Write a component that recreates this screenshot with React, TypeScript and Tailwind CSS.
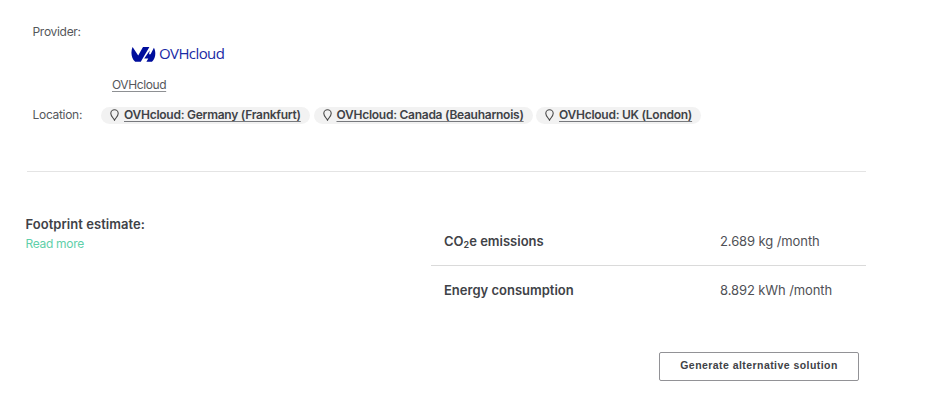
import React from 'react';

const LOCATIONS = [
  { name: 'OVHcloud: Germany (Frankfurt)', width: 'w-[209px]', textWidth: 'w-[177px]' },
  { name: 'OVHcloud: Canada (Beauharnois)', width: 'w-[219px]', textWidth: 'w-[187px]' },
  { name: 'OVHcloud: UK (London)', width: 'w-[165px]', textWidth: 'w-[132px]' },
];

const ESTIMATES = [
  { label: <>CO<sub className="text-[9px] bottom-[-2px]">2</sub>e emissions</>, value: '2.689 kg /month' },
  { label: <>Energy consumption</>, value: '8.892 kWh /month' },
];

const PinIcon: React.FC = () => (
  <svg width="9" height="12" viewBox="0 0 9 12" fill="none" stroke="#4a4a4a" strokeWidth="1.1" className="shrink-0">
    <path d="M4.5 11.2C3.6 9.2 0.8 7.1 0.8 4.4a3.7 3.7 0 0 1 7.4 0C8.2 7.1 5.4 9.2 4.5 11.2Z" />
  </svg>
);

const OvhLogo: React.FC = () => (
  <div className="flex h-5 items-center gap-[3px] text-[#1a2ba5]">
    <svg width="25" height="15" viewBox="0 0 25 15" fill="#000e9c">
      <path d="M1.6 0L7.2 8.6L12 0H18.4L9.8 14.8H4.2C0.2 11 -0.5 5 1.6 0Z" />
      <path d="M22.9 0.8C25.2 5 24.8 11 21 14.8H15.4L17.3 11.4H13.2L18.8 3.6L18 7.2H19.6Z" />
    </svg>
    <span className="pb-0.5 font-['Open_Sans',sans-serif] text-[15px] leading-[18px] tracking-[-0.6px]">OVHcloud</span>
  </div>
);

const App: React.FC = () => {
  return (
    <div className="h-[410px] w-[936px] overflow-hidden bg-white font-['Inter',sans-serif] text-[#404247]">
      <div className="pt-6 pl-[32.5px] text-xs leading-4 tracking-[-0.3px]">
        <div className="flex text-[#55575b]">
          <span className="w-[79.5px]">Provider:</span>
          <div className="pt-5">
            <div className="pl-[19px]">
              <OvhLogo />
            </div>
            <a className="mt-[13px] block tracking-[-0.4px] underline decoration-[#8e9093] decoration-1 underline-offset-2">OVHcloud</a>
          </div>
        </div>

        <div className="mt-[14px] flex items-center">
          <span className="w-[68.5px] pb-px text-[#55575b]">Location:</span>
          <div className="flex gap-[3.5px]">
            {LOCATIONS.map((item) => (
              <div key={item.name} className={`flex h-[17px] items-center gap-[5px] rounded-full bg-[#f2f2f2] pb-px pl-[9px] ${item.width}`}>
                <PinIcon />
                <a className={`font-semibold tracking-[-0.26px] whitespace-nowrap underline decoration-[#77797d] decoration-1 underline-offset-2 ${item.textWidth}`}>{item.name}</a>
              </div>
            ))}
          </div>
        </div>
      </div>

      <hr className="mt-[46.5px] ml-[27px] w-[839px] border-[#e4e4e4]" />

      <div className="flex pt-[43px] pl-[25.5px]">
        <div className="w-[405.5px]">
          <h2 className="text-[13px] leading-[18px] font-semibold tracking-[0.05px]">Footprint estimate:</h2>
          <a className="mt-0.5 block text-xs leading-[18px] tracking-[-0.3px] text-[#5fcfa9]">Read more</a>
        </div>
        <div className="w-[435px] divide-y divide-[#dadada] pt-0.5 text-[13px]">
          {ESTIMATES.map((item) => (
            <div key={item.value} className="flex h-[49px] items-center pt-0.5 pl-[13px]">
              <span className="w-[276px] font-semibold">{item.label}</span>
              <span className="tracking-[-0.1px] text-[#4f5156]">{item.value}</span>
            </div>
          ))}
        </div>
      </div>

      <div className="mt-[37px] flex pl-[659px]">
        <button className="h-[29px] w-[200px] rounded-[2px] border border-[#929296] bg-white font-['Liberation_Sans',sans-serif] text-[10.5px] font-bold tracking-[0.44px]">
          Generate alternative solution
        </button>
      </div>
    </div>
  );
};

export default App;
